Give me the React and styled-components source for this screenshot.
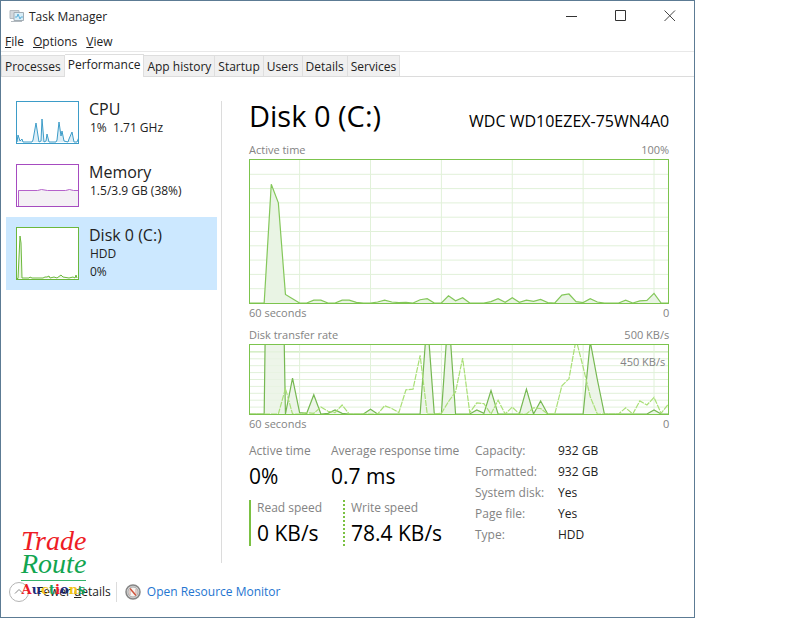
import React from 'react';
import styled, { createGlobalStyle } from 'styled-components';

const GlobalStyle = createGlobalStyle`
    * {
        box-sizing: border-box;
    }
    body {
        margin: 0;
        background: #fff;
        font-family: 'Open Sans', 'Noto Sans', sans-serif;
        font-size: 12px;
        line-height: 18px;
        color: #222;
    }
    button {
        margin: 0;
        padding: 0;
        border: 0;
        background: none;
        color: inherit;
        font: inherit;
        text-align: left;
    }
    h1, h2, p, dl, dd {
        margin: 0;
        font-weight: normal;
    }
`
const Desktop = styled.div`
    padding-right: 13.1%;
`
const Window = styled.div`
    position: relative;
    display: flex;
    flex-direction: column;
    min-height: 100vh;
    border: 1px solid #5c7b94;
    background: #fff;
`
const TitleBar = styled.header`
    display: flex;
    align-items: center;
    height: 30px;
    padding-left: 8px;
`
const Title = styled.h1`
    flex: 1;
    padding: 1px 0 0 4px;
    font-size: 12px;
`
const WindowButton = styled.button`
    display: flex;
    align-items: center;
    justify-content: center;
    width: 49px;
    height: 30px;
`
const MenuBar = styled.nav`
    display: flex;
    gap: 9px;
    height: 21px;
    padding: 2px 4px 0;
    border-bottom: 1px solid #e8e8e8;
`
const Tabs = styled.div`
    display: flex;
    align-items: flex-end;
    height: 25px;
    border-bottom: 1px solid #dcdcdc;
`
const Tab = styled.button`
    height: ${props => props.$active ? '23px' : '21px'};
    padding: ${props => props.$active ? '0 3px 2px' : '1px 3px 0'};
    margin-bottom: ${props => props.$active ? '-1px' : '0'};
    background: ${props => props.$active ? '#fff' : '#f0f0f0'};
    border: 1px solid #dedede;
    border-left-width: ${props => props.$first ? '1px' : '0'};
    border-bottom: 0;
    white-space: nowrap;
`
const Body = styled.div`
    display: flex;
    flex: 1;
    padding-left: 5px;
`
const Sidebar = styled.aside`
    width: 212px;
    padding-top: 14px;
`
const Item = styled.button`
    display: flex;
    gap: 10px;
    width: 211px;
    min-height: 63px;
    padding: 10px 10px ${props => props.$active ? '9px' : '10px'};
    background: ${props => props.$active ? '#cce8ff' : 'transparent'};
`
const Thumb = styled.svg`
    flex: none;
    width: 63px;
    height: ${props => props.$tall ? '53px' : '43px'};
    background: #fff;
    border: 1px solid ${props => props.$color};
`
const ItemName = styled.span`
    display: block;
    margin-top: -2px;
    font-size: 16px;
    line-height: 20px;
`
const ItemInfo = styled.span`
    display: block;
    padding-left: 1px;
`
const Divider = styled.div`
    width: 1px;
    margin: 24px 27px 0 3px;
    background: #dcdcdc;
`
const Main = styled.main`
    flex: 1;
    min-width: 0;
    padding: 20px 25px 0 0;
`
const Heading = styled.div`
    display: flex;
    align-items: baseline;
    justify-content: space-between;
    height: 44px;
    color: #000;
`
const DiskName = styled.h2`
    font-size: 29px;
    line-height: 38px;
`
const Model = styled.span`
    font-size: 16px;
`
const Legend = styled.div`
    display: flex;
    justify-content: space-between;
    height: ${props => props.$foot ? '22px' : '18px'};
    line-height: 17px;
    color: #838383;
    font-size: 11px;
`
const Plot = styled.div`
    position: relative;
    height: ${props => props.$short ? '71px' : '145px'};
    border: 1px solid #7cc44d;
`
const PlotSvg = styled.svg`
    display: block;
    width: 100%;
    height: 100%;
`
const ScaleMark = styled.span`
    position: absolute;
    top: 8px;
    right: 3px;
    color: #838383;
    font-size: 11px;
`
const Details = styled.div`
    display: flex;
    padding-top: 6px;
`
const Stats = styled.div`
    width: 226px;
`
const StatRow = styled.div`
    display: flex;
    height: 57px;
`
const Stat = styled.div`
    width: ${props => props.$width};
    height: 46px;
    padding-left: ${props => props.$bar ? '6px' : '0'};
    border-left: ${props => props.$bar ? '2px ' + props.$bar + ' #7bc143' : '0'};
    white-space: nowrap;
`
const StatLabel = styled.p`
    line-height: 16px;
    color: #838383;
`
const StatValue = styled.p`
    font-size: 21px;
    line-height: 34px;
    color: #000;
`
const Facts = styled.dl`
    display: grid;
    grid-template-columns: 83px auto;
    grid-auto-rows: 21px;
    align-content: start;
    line-height: 16px;
    white-space: nowrap;
`
const FactName = styled.dt`
    color: #838383;
`
const Footer = styled.footer`
    display: flex;
    align-items: center;
    height: 54px;
    padding: 4px 0 0 8px;
`
const Fewer = styled.button`
    display: flex;
    align-items: center;
    gap: 8px;
    padding-right: 5px;
    border-right: 1px solid #dcdcdc;
    line-height: 14px;
`
const MonitorLink = styled.a`
    display: flex;
    align-items: center;
    gap: 6px;
    margin-left: 8px;
    color: #2475d0;
    text-decoration: none;
`
const Watermark = styled.div`
    position: absolute;
    left: 20px;
    bottom: 18px;
    width: 65px;
    font-family: 'Liberation Serif', serif;
    text-align: center;
    pointer-events: none;
`
const Script = styled.div`
    font-size: 28px;
    font-style: italic;
    line-height: 23px;
    color: ${props => props.color};
`
const Auctions = styled.div`
    display: flex;
    justify-content: center;
    margin-top: 5px;
    border-top: 1px solid #35b36b;
    font-family: 'DejaVu Serif', serif;
    font-size: 13px;
    font-weight: bold;
    line-height: 18px;
`
const Letter = styled.span`
    color: ${props => props.color};
`

// one value per second, percent of the full scale
const activeTime = [
    0, 0, 0, 83, 70, 6, 3, 0, 0, 2, 2, 0, 0, 2, 2, 0.5, 0, 0, 0.7, 2,
    0.7, 0.3, 0.5, 0, 2.3, 3, 0, 0, 5, 1.5, 3.7, 0, 0, 0, 1, 3, 0.5, 3.7, 0.5, 2,
    1.2, 2.5, 0.3, 0, 5.5, 6.3, 1, 0.3, 3, 0.7, 0, 0, 0, 2, 0, 1.5, 1.8, 6.7, 0, 0
]
const readRate = [
    0, 0, 0, 800, 600, 0, 52, 2, 1, 28, 0, 1, 6, 1, 0, 0, 0, 7, 0, 0,
    0, 0, 0, 0, 0, 140, 0, 0, 150, 0, 0, 0, 6, 1, 34, 0, 0, 0, 0, 36,
    0, 19, 0, 0, 0, 0, 0, 0, 105, 50, 0, 0, 0, 0, 0, 0, 0, 6, 0, 0
]
const writeRate = [
    0, 0, 0, 0, 0, 37, 0, 0, 2, 1, 10, 4, 2, 13, 0, 0, 0, 0, 0, 12,
    8, 2, 35, 36, 85, 0, 0, 1, 18, 32, 81, 2, 16, 15, 0, 20, 0, 10, 0, 0,
    9, 8, 0, 0, 41, 51, 108, 68, 25, 0, 0, 0, 0, 9, 0, 19, 13, 24, 1, 14
]

const toPoints = (values) => values.map((v, i) => `${i},${100 - v}`).join(' ')

function Chart({ series, short, children }) {
    return (
        <Plot $short={short}>
            <PlotSvg viewBox="0 0 59 100" preserveAspectRatio="none">
                {[10, 20, 30, 40, 50, 60, 70, 80, 90].map(y => (
                    <path key={y} d={`M0 ${y}H59`} stroke={short && y === 10 ? '#bce3a3' : '#e1f1d9'} vectorEffect="non-scaling-stroke" />
                ))}
                {[7, 17, 27, 37, 47, 57].map(x => (
                    <path key={x} d={`M${x} 0V100`} stroke="#e1f1d9" vectorEffect="non-scaling-stroke" />
                ))}
                {series.map(s => (
                    <polygon key={s.color} points={`0,100 ${toPoints(s.values)} 59,100`} fill={s.fill} />
                ))}
                {series.map(s => (
                    <polyline key={s.color} points={toPoints(s.values)} fill="none" stroke={s.color} strokeWidth="1.2" strokeDasharray={s.dash} vectorEffect="non-scaling-stroke" />
                ))}
            </PlotSvg>
            {children}
        </Plot>
    )
}

const tabs = ['Processes', 'Performance', 'App history', 'Startup', 'Users', 'Details', 'Services']

const facts = [
    ['Capacity:', '932 GB'],
    ['Formatted:', '932 GB'],
    ['System disk:', 'Yes'],
    ['Page file:', 'Yes'],
    ['Type:', 'HDD']
]

const auctionLetters = [
    ['A', '#ee1c25'], ['u', '#1b2a7a'], ['c', '#f5c518'], ['t', '#18a558'],
    ['i', '#ee1c25'], ['o', '#1b2a7a'], ['n', '#f5c518'], ['s', '#18a558']
]

export default function App() {
    return (
        <Desktop>
            <GlobalStyle />
            <Window>
                <TitleBar>
                    <svg width="16" height="16" viewBox="0 0 16 16">
                        <path d="M1 2.500h9v8H1z" fill="#d3d8dc" stroke="#b3bac0" />
                        <path d="M5 4.500h9.500v8H5z" fill="#d9eef8" stroke="#a3adb4" />
                        <path d="M6 9h2l1-3 2 5 1-2h2" fill="none" stroke="#5fb0d8" />
                        <path d="M2 13.500h11" stroke="#b3bac0" />
                    </svg>
                    <Title>Task Manager</Title>
                    <WindowButton aria-label="Minimize">
                        <svg width="12" height="12"><path d="M0 6.500h11" stroke="#333" /></svg>
                    </WindowButton>
                    <WindowButton aria-label="Maximize">
                        <svg width="12" height="12"><path d="M.5.5h10v10H.5z" fill="none" stroke="#333" /></svg>
                    </WindowButton>
                    <WindowButton aria-label="Close">
                        <svg width="12" height="12"><path d="M.5.5l10.500 10.500M11 .5L.5 11" stroke="#444" /></svg>
                    </WindowButton>
                </TitleBar>
                <MenuBar>
                    <button><u>F</u>ile</button>
                    <button><u>O</u>ptions</button>
                    <button><u>V</u>iew</button>
                </MenuBar>
                <Tabs>
                    {tabs.map((tab, i) => (
                        <Tab key={tab} $first={i === 0} $active={tab === 'Performance'}>{tab}</Tab>
                    ))}
                </Tabs>
                <Body>
                    <Sidebar>
                        <Item>
                            <Thumb $color="#3d9cc8" viewBox="0 0 61 41">
                                <path d="M0 40l1-7 2 6 2-2 1 3 9 0 1-2 3-17 3 19 2-1 1-22 2 23 2-1 1-7 2 8 7 0 1-2 2-18 2 14 1-5 2 10 4 1 1-3 3-7 2 10 3 0 2-5 2 5" fill="#dceef7" stroke="#3d9cc8" />
                            </Thumb>
                            <span>
                                <ItemName>CPU</ItemName>
                                <ItemInfo>1%&nbsp; 1.71 GHz</ItemInfo>
                            </span>
                        </Item>
                        <Item>
                            <Thumb $color="#a64bc0" viewBox="0 0 61 41">
                                <path d="M1.500 41V25.500h19l4-1 6 1h18l4-1 4 1h5V41" fill="#f4f0f5" stroke="#b562cb" />
                            </Thumb>
                            <span>
                                <ItemName>Memory</ItemName>
                                <ItemInfo>1.5/3.9 GB (38%)</ItemInfo>
                            </span>
                        </Item>
                        <Item $active>
                            <Thumb $tall $color="#6cb83c" viewBox="0 0 61 51">
                                <path d="M0 50.500h1L3 8l1 7 1 35 7 0 1-1 2 1 11 0 2-1 2 0 2-1 1 2 4-1 3 1 4-3 2 2 6 1 4-1 2 1 1-3 1 3" fill="#eaf5e3" stroke="#6cb83c" />
                            </Thumb>
                            <span>
                                <ItemName>Disk 0 (C:)</ItemName>
                                <ItemInfo>HDD</ItemInfo>
                                <ItemInfo>0%</ItemInfo>
                            </span>
                        </Item>
                    </Sidebar>
                    <Divider />
                    <Main>
                        <Heading>
                            <DiskName>Disk 0 (C:)</DiskName>
                            <Model>WDC WD10EZEX-75WN4A0</Model>
                        </Heading>
                        <Legend><span>Active time</span><span>100%</span></Legend>
                        <Chart series={[{ values: activeTime, color: '#84c75a', fill: '#e9f4e4' }]} />
                        <Legend $foot><span>60 seconds</span><span>0</span></Legend>
                        <Legend><span>Disk transfer rate</span><span>500 KB/s</span></Legend>
                        <Chart
                            short
                            series={[
                                { values: readRate, color: '#76b852', fill: '#e9f3e4cc' },
                                { values: writeRate, color: '#a9df76', fill: 'none', dash: '6 1' }
                            ]}
                        >
                            <ScaleMark>450 KB/s</ScaleMark>
                        </Chart>
                        <Legend $foot><span>60 seconds</span><span>0</span></Legend>
                        <Details>
                            <Stats>
                                <StatRow>
                                    <Stat $width="82px">
                                        <StatLabel>Active time</StatLabel>
                                        <StatValue>0%</StatValue>
                                    </Stat>
                                    <Stat>
                                        <StatLabel>Average response time</StatLabel>
                                        <StatValue>0.7 ms</StatValue>
                                    </Stat>
                                </StatRow>
                                <StatRow>
                                    <Stat $width="94px" $bar="solid">
                                        <StatLabel>Read speed</StatLabel>
                                        <StatValue>0 KB/s</StatValue>
                                    </Stat>
                                    <Stat $bar="dotted">
                                        <StatLabel>Write speed</StatLabel>
                                        <StatValue>78.4 KB/s</StatValue>
                                    </Stat>
                                </StatRow>
                            </Stats>
                            <Facts>
                                {facts.map(([name, value]) => (
                                    <React.Fragment key={name}>
                                        <FactName>{name}</FactName>
                                        <dd>{value}</dd>
                                    </React.Fragment>
                                ))}
                            </Facts>
                        </Details>
                    </Main>
                </Body>
                <Footer>
                    <Fewer>
                        <svg width="20" height="20" viewBox="0 0 20 20" fill="none">
                            <circle cx="10" cy="10" r="9.500" stroke="#b4b4b4" />
                            <path d="M6 11.500L10 7.500l4 4" stroke="#888" />
                        </svg>
                        <span>Fewer <u>d</u>etails</span>
                    </Fewer>
                    <MonitorLink href="#">
                        <svg width="16" height="16" viewBox="0 0 16 16">
                            <circle cx="8" cy="8" r="7" fill="#d8d8d8" stroke="#858585" strokeWidth="1.500" />
                            <circle cx="8" cy="8" r="5" fill="#f6f3f0" stroke="#a8a8a8" />
                            <path d="M5 4.500l6 7" stroke="#d0523a" strokeWidth="1.500" />
                            <path d="M5 11V6M11 10V5" stroke="#c9a09a" />
                        </svg>
                        Open Resource Monitor
                    </MonitorLink>
                </Footer>
                <Watermark>
                    <Script color="#ee1c25">Trade</Script>
                    <Script color="#12a550">Route</Script>
                    <Auctions>
                        {auctionLetters.map(([letter, color]) => (
                            <Letter key={letter} color={color}>{letter}</Letter>
                        ))}
                    </Auctions>
                </Watermark>
            </Window>
        </Desktop>
    )
};
